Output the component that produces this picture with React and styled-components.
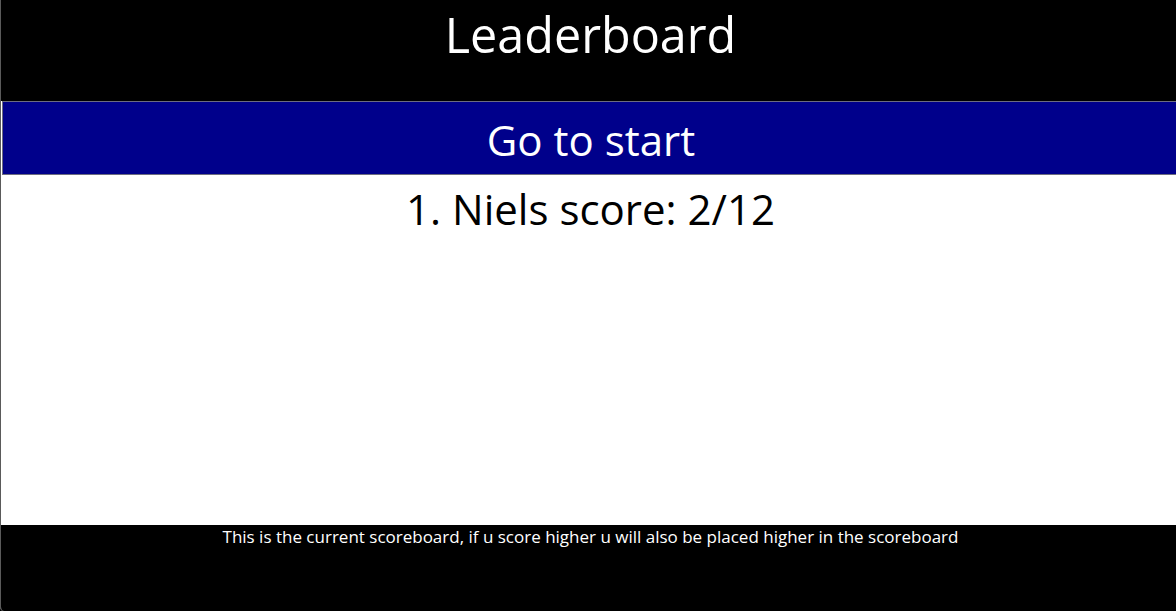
import React from "react";
import styled, { createGlobalStyle } from "styled-components";

const Global = createGlobalStyle`
  html, body { margin: 0; padding: 0; background: #000; overflow: hidden; }
  body { font-family: "Open Sans", "Noto Sans", sans-serif; }
`;

const Page = styled.div`
  box-sizing: border-box;
  width: 1180px;
  height: 611px;
  display: flex;
  flex-direction: column;
  border-left: 1px solid #5a5a5a;
  border-bottom-left-radius: 4px;
  overflow: hidden;
  background: #fff;
`;

const Header = styled.header`
  height: 101px;
  flex: none;
  background: #000;
  text-align: center;
`;

const Title = styled.h1`
  margin: 0;
  padding-top: 5px;
  font-size: 48.5px;
  font-weight: 400;
  line-height: 1.2;
  color: #fff;
`;

const StartButton = styled.button`
  box-sizing: border-box;
  flex: none;
  height: 74px;
  margin: 0 0 0 1px;
  width: calc(100% - 1px);
  padding: 4px 0 0;
  background: #00008b;
  border: 1px solid #6c6c80;
  color: #fff;
  font-family: inherit;
  font-size: 42px;
  line-height: 1.2;
  cursor: pointer;
`;

const Board = styled.main`
  flex: 1;
  background: #fff;
  text-align: center;
  padding-top: 9px;
`;

const Entry = styled.p`
  margin: 0;
  font-size: 42px;
  line-height: 1.2;
  color: #000;
`;

const Footer = styled.footer`
  height: 86px;
  flex: none;
  background: #000;
  text-align: center;
  padding-top: 2px;
  box-sizing: border-box;
`;

const Note = styled.p`
  margin: 0;
  font-size: 17px;
  line-height: 1.2;
  color: #fff;
`;

export default function App() {
  const scores = [{ name: "Niels", score: 2, total: 12 }];
  return (
    <>
      <Global />
      <Page>
        <Header>
          <Title>Leaderboard</Title>
        </Header>
        <StartButton>Go to start</StartButton>
        <Board>
          {scores.map((s, i) => (
            <Entry key={s.name}>
              {i + 1}. {s.name} score: {s.score}/{s.total}
            </Entry>
          ))}
        </Board>
        <Footer>
          <Note>
            This is the current scoreboard, if u score higher u will also be placed higher in the scoreboard
          </Note>
        </Footer>
      </Page>
    </>
  );
}
